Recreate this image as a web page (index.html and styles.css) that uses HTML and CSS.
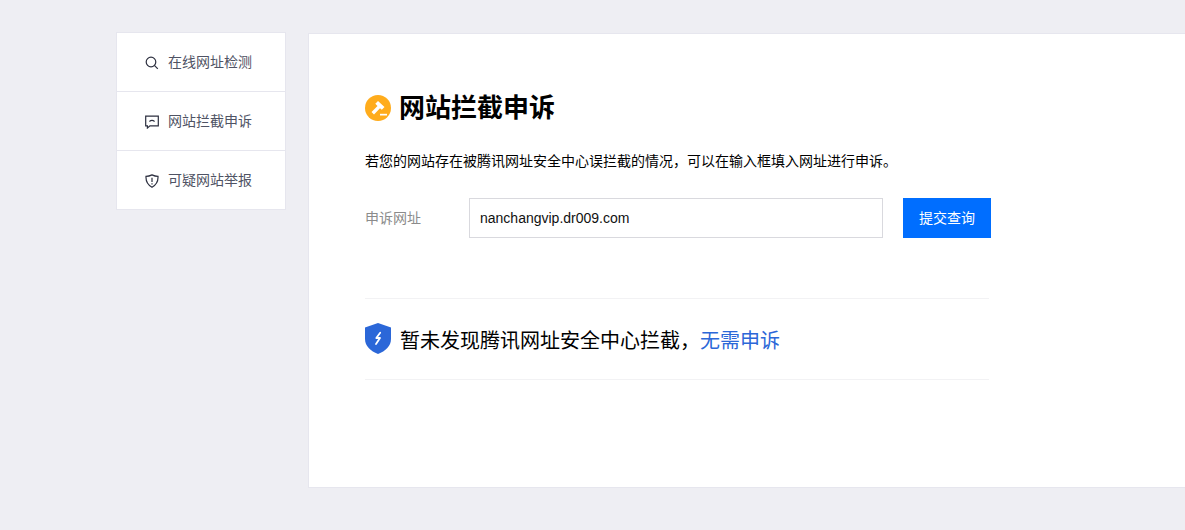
FILE: index.html
```html
<!DOCTYPE html>
<html lang="zh-CN">
<head>
<meta charset="utf-8">
<title>网站拦截申诉</title>
<link rel="stylesheet" href="styles.css">
</head>
<body>
<div class="page">
  <nav class="side">
    <a class="side-item">
      <svg class="side-icon" viewBox="0 0 14 14"><circle cx="6" cy="6" r="4.800"/><path d="M9.400 9.400 12.800 12.800"/></svg>
      <span class="side-text">在线网址检测</span>
    </a>
    <a class="side-item">
      <svg class="side-icon" viewBox="0 0 14 14"><path d="M.7 1.200h12.600v9.600H5L2.400 13v-2.200H.7z"/><path d="M4.400 6.400Q7 4.400 9.600 6.400"/></svg>
      <span class="side-text">网站拦截申诉</span>
    </a>
    <a class="side-item">
      <svg class="side-icon" viewBox="0 0 14 14"><path d="M7 .9Q10 2.400 13 2.400 13.400 9.800 7 13.200.6 9.800 1 2.400 4 2.400 7 .9z"/><path d="M7 3.800V8M7 9.200v1.300"/></svg>
      <span class="side-text">可疑网站举报</span>
    </a>
  </nav>
  <main class="panel">
    <h1 class="title">
      <svg class="title-icon" viewBox="0 0 26 26"><circle cx="13" cy="13" r="13" fill="#ffac1c"/><path d="M13 6 19.500 12 16.800 14.800 15 13.200 9 19.500 6.500 17 12.500 11 10.300 8.800z" fill="#fff"/><path d="M15 18.800h7v1.700h-7z" fill="#fff"/></svg>
      <span>网站拦截申诉</span>
    </h1>
    <p class="desc">若您的网站存在被腾讯网址安全中心误拦截的情况，可以在输入框填入网址进行申诉。</p>
    <form class="query">
      <label class="query-label" for="url">申诉网址</label>
      <input class="query-input" id="url" type="text" value="nanchangvip.dr009.com">
      <button class="query-btn" type="button">提交查询</button>
    </form>
    <div class="result">
      <svg class="result-icon" viewBox="0 0 26 31"><path d="M13 0 26 4.500V16c0 7-5.500 12-13 15C5.500 28 0 23 0 16V4.500z" fill="#2b67d8"/><path d="M15.200 9.800 11.300 15H15L11 21" fill="none" stroke="#fff" stroke-width="1.800" stroke-linecap="round" stroke-linejoin="round"/></svg>
      <span>暂未发现腾讯网址安全中心拦截，<em class="result-link">无需申诉</em></span>
    </div>
  </main>
</div>
</body>
</html>
```
FILE: styles.css
```css
* { box-sizing: border-box; }
html, body { margin: 0; height: 100%; }
body {
  background: #eeeef3;
  font-family: "Liberation Sans", "Noto Sans CJK SC", sans-serif;
  overflow: hidden;
}
.page {
  display: flex;
  align-items: flex-start;
  padding: 32px 0 0 116px;
}
.side {
  flex: none;
  width: 170px;
  background: #fff;
  border: 1px solid #e6e6ee;
  display: flex;
  flex-direction: column;
}
.side-item {
  height: 59px;
  display: flex;
  align-items: center;
  gap: 9px;
  padding-left: 28px;
  font-size: 14px;
  color: #4f5364;
  border-bottom: 1px solid #e6e6ee;
}
.side-item:last-child { height: 58px; border-bottom: 0; }
.side-text { padding-bottom: 2px; }
.side-icon {
  width: 14px;
  height: 14px;
  flex: none;
  margin-top: 2px;
  fill: none;
  stroke: #2c2f3f;
  stroke-width: 1.2;
}
.panel {
  flex: none;
  width: 877px;
  height: 455px;
  margin: 1px 0 0 22px;
  background: #fff;
  border: 1px solid #e6e6ee;
  border-right: 0;
  padding: 59px 0 0 56px;
}
.title {
  display: flex;
  align-items: center;
  gap: 8px;
  margin: 0;
  height: 30px;
  font-size: 26px;
  line-height: 30px;
  font-weight: 700;
  color: #000;
}
.title-icon { width: 26px; height: 26px; flex: none; }
.desc {
  margin: 28px 0 0;
  font-size: 14px;
  line-height: 20px;
  color: #000;
}
.query {
  display: flex;
  align-items: center;
  margin-top: 27px;
}
.query-label {
  width: 104px;
  padding-bottom: 2px;
  font-size: 14px;
  color: #8b8b8b;
}
.query-input {
  width: 414px;
  height: 40px;
  border: 1px solid #d9d9de;
  padding: 0 10px;
  font: 14px "Liberation Sans", sans-serif;
  color: #111;
  outline: 0;
  background: #fff;
}
.query-btn {
  width: 88px;
  height: 40px;
  margin-left: 20px;
  padding: 0 0 2px;
  border: 0;
  background: #006eff;
  color: #fff;
  font: 14px "Liberation Sans", "Noto Sans CJK SC", sans-serif;
}
.result {
  width: 624px;
  height: 82px;
  margin-top: 60px;
  border-top: 1px solid #f2f2f4;
  border-bottom: 1px solid #f2f2f4;
  display: flex;
  align-items: center;
  gap: 9px;
  font-size: 20px;
  color: #000;
}
.result-icon { width: 26px; height: 31px; flex: none; margin-top: -1px; }
.result-link { font-style: normal; color: #2b67d8; }
```
